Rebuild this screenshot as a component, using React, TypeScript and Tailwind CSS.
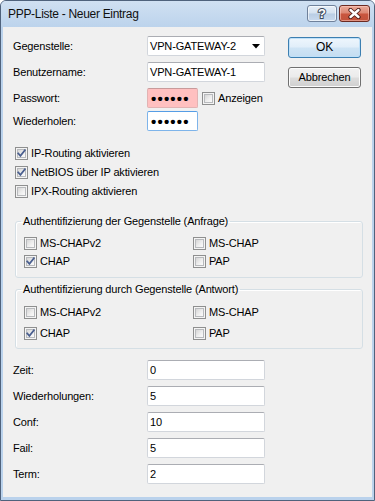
import React from "react";

function Check({ checked }: { checked?: boolean }) {
  return (
    <span className="w-[13px] h-[13px] shrink-0 border border-[#8e8f8f] bg-[#f4f4f4] p-[1px] flex">
      <span className="flex-1 border border-[#b8babd] bg-[linear-gradient(135deg,#d6d6d6_0%,#eeeeee_55%,#fbfbfb_100%)] relative">
        {checked && (
          <svg className="absolute left-[-1px] top-[-1px]" width="9" height="9" viewBox="0 0 9 9">
            <path d="M1.2 4.4 L3.4 6.9 L7.9 1.3" fill="none" stroke="#4a5f8f" strokeWidth="1.7" strokeLinecap="square" />
          </svg>
        )}
      </span>
    </span>
  );
}

function CheckRow({ label, checked, h = "h-[19px]" }: { label: string; checked?: boolean; h?: string }) {
  return (
    <div className={`flex items-center gap-[3px] ${h}`}>
      <Check checked={checked} />
      <span className="leading-[13px]">{label}</span>
    </div>
  );
}

function Field({ value, w = "w-[118px]", extra = "" }: { value: string; w?: string; extra?: string }) {
  return (
    <div className={`${w} h-[20px] rounded-[2px] border border-[#d2d6dc] border-t-[#abadb3] bg-white flex items-center pl-[2px] ${extra}`}>
      <span className="leading-[13px]">{value}</span>
    </div>
  );
}

function Row({ label, children, mt = "" }: { label: string; children: React.ReactNode; mt?: string }) {
  return (
    <div className={`flex items-center h-[20px] ${mt}`}>
      <span className="w-[134px] shrink-0 leading-[13px]">{label}</span>
      {children}
    </div>
  );
}

function Dots() {
  return (
    <span className="font-bold text-[15px] tracking-[1.2px] leading-[14px] pl-[1px] mt-[1px]">••••••</span>
  );
}

export default function App() {
  return (
    <div className="w-[375px] h-[501px] bg-[#bad2ec] border border-[#4f627c] rounded-t-[6px] flex flex-col font-['Liberation_Sans',Arial,sans-serif] text-[11px] tracking-[-0.15px] text-black overflow-hidden">
      {/* Title bar */}
      <div className="h-[26px] shrink-0 flex items-start bg-[linear-gradient(#d0e0f2,#bcd3ec)]">
        <span className="ml-[7px] mt-[6px] text-[12px] tracking-[-0.3px] leading-[15px] text-[#101010]">
          PPP-Liste - Neuer Eintrag
        </span>
        <div className="ml-auto mt-[4px] mr-[4px] flex gap-[2px]">
          <div className="w-[30px] h-[17px] rounded-[3px] border border-[#6f819b] bg-[linear-gradient(#e6eef8_0%,#d5e2f0_48%,#b9cde4_52%,#c9daee_100%)] shadow-[inset_0_0_0_1px_rgba(255,255,255,0.6)] flex items-center justify-center">
            <span className="text-[13px] font-bold leading-[13px] text-white [-webkit-text-stroke:2px_#3d4a5c] [paint-order:stroke_fill] tracking-normal">?</span>
          </div>
          <div className="w-[31px] h-[17px] rounded-[3px] border border-[#6b2a22] bg-[linear-gradient(#eaa999_0%,#dc8672_48%,#c9563f_52%,#c2523b_100%)] shadow-[inset_0_0_0_1px_rgba(255,210,200,0.5)] flex items-center justify-center">
            <svg width="13" height="11" viewBox="0 0 13 11">
              <path d="M2.5 2 L10.5 9 M10.5 2 L2.5 9" stroke="#4a1a16" strokeWidth="4.2" strokeLinecap="round" />
              <path d="M2.5 2 L10.5 9 M10.5 2 L2.5 9" stroke="#ffffff" strokeWidth="2.4" strokeLinecap="round" />
            </svg>
          </div>
        </div>
      </div>

      {/* Client */}
      <div className="mx-[2px] h-[470px] shrink-0 bg-[#f0f0f0] flex flex-col">
        <div className="flex pt-[9px]">
          <div className="pl-[10px] flex flex-col">
            <Row label="Gegenstelle:">
              <div className="w-[118px] h-[20px] rounded-[2px] border border-[#d2d6dc] border-t-[#abadb3] bg-white flex items-center pl-[2px]">
                <span className="leading-[13px]">VPN-GATEWAY-2</span>
                <svg className="ml-auto mr-[4px]" width="8" height="5" viewBox="0 0 8 5">
                  <path d="M0 0 H8 L4 4.5 Z" fill="#000" />
                </svg>
              </div>
            </Row>
            <Row label="Benutzername:" mt="mt-[6px]">
              <Field value="VPN-GATEWAY-1" />
            </Row>
            <Row label="Passwort:" mt="mt-[6px]">
              <div className="w-[51px] h-[20px] rounded-[2px] border border-[#e2b3b3] border-t-[#c89b9b] bg-[#ffc0c0] flex items-center pl-[2px] overflow-hidden">
                <Dots />
              </div>
              <div className="ml-[4px] flex items-center gap-[3px]">
                <Check />
                <span className="leading-[13px]">Anzeigen</span>
              </div>
            </Row>
            <Row label="Wiederholen:" mt="mt-[3px]">
              <div className="w-[51px] h-[20px] rounded-[2px] border border-[#7eb4ea] border-t-[#569de5] bg-white flex items-center pl-[2px] overflow-hidden">
                <Dots />
              </div>
            </Row>
          </div>
          <div className="ml-auto mr-[11px] flex flex-col pt-[1px] gap-[9px]">
            <div className="w-[73px] h-[21px] rounded-[3px] border border-[#3c7fb1] bg-[linear-gradient(#eef6fd_0%,#e1eef9_48%,#cfe4f5_52%,#c4ddf1_100%)] shadow-[inset_0_0_0_1px_#bfe0f8] flex items-center justify-center">
              <span className="leading-[13px] text-[12px]">OK</span>
            </div>
            <div className="w-[73px] h-[21px] rounded-[3px] border border-[#707070] bg-[linear-gradient(#f2f2f2_0%,#ebebeb_48%,#dddddd_52%,#cfcfcf_100%)] shadow-[inset_0_0_0_1px_#fcfcfc] flex items-center justify-center">
              <span className="leading-[13px]">Abbrechen</span>
            </div>
          </div>
        </div>

        <div className="pl-[12px] mt-[13px] flex flex-col">
          <CheckRow label="IP-Routing aktivieren" checked />
          <CheckRow label="NetBIOS über IP aktivieren" checked />
          <CheckRow label="IPX-Routing aktivieren" />
        </div>

        <fieldset className="ml-[12px] w-[348px] mt-[13px] border border-[#d5dfe5] rounded-[3px] shadow-[inset_1px_1px_0_#ffffff]">
          <legend className="ml-[5px] px-[2px] leading-[14px]">Authentifizierung der Gegenstelle (Anfrage)</legend>
          <div className="grid grid-cols-[169px_1fr] pl-[8px] pt-[6px] pb-[7px]">
            <CheckRow label="MS-CHAPv2" h="h-[18px]" />
            <CheckRow label="MS-CHAP" h="h-[18px]" />
            <CheckRow label="CHAP" checked h="h-[18px]" />
            <CheckRow label="PAP" h="h-[18px]" />
          </div>
        </fieldset>

        <fieldset className="ml-[12px] w-[348px] mt-[4px] border border-[#d5dfe5] rounded-[3px] shadow-[inset_1px_1px_0_#ffffff]">
          <legend className="ml-[5px] px-[2px] leading-[14px]">Authentifizierung durch Gegenstelle (Antwort)</legend>
          <div className="grid grid-cols-[169px_1fr] gap-y-[1px] pl-[8px] pt-[6px] pb-[5px]">
            <CheckRow label="MS-CHAPv2" h="h-[20px]" />
            <CheckRow label="MS-CHAP" h="h-[20px]" />
            <CheckRow label="CHAP" checked h="h-[20px]" />
            <CheckRow label="PAP" h="h-[20px]" />
          </div>
        </fieldset>

        <div className="pl-[10px] mt-[11px] flex flex-col gap-[6px]">
          <Row label="Zeit:"><Field value="0" /></Row>
          <Row label="Wiederholungen:"><Field value="5" /></Row>
          <Row label="Conf:"><Field value="10" /></Row>
          <Row label="Fail:"><Field value="5" /></Row>
          <Row label="Term:"><Field value="2" /></Row>
        </div>
      </div>
    </div>
  );
}
